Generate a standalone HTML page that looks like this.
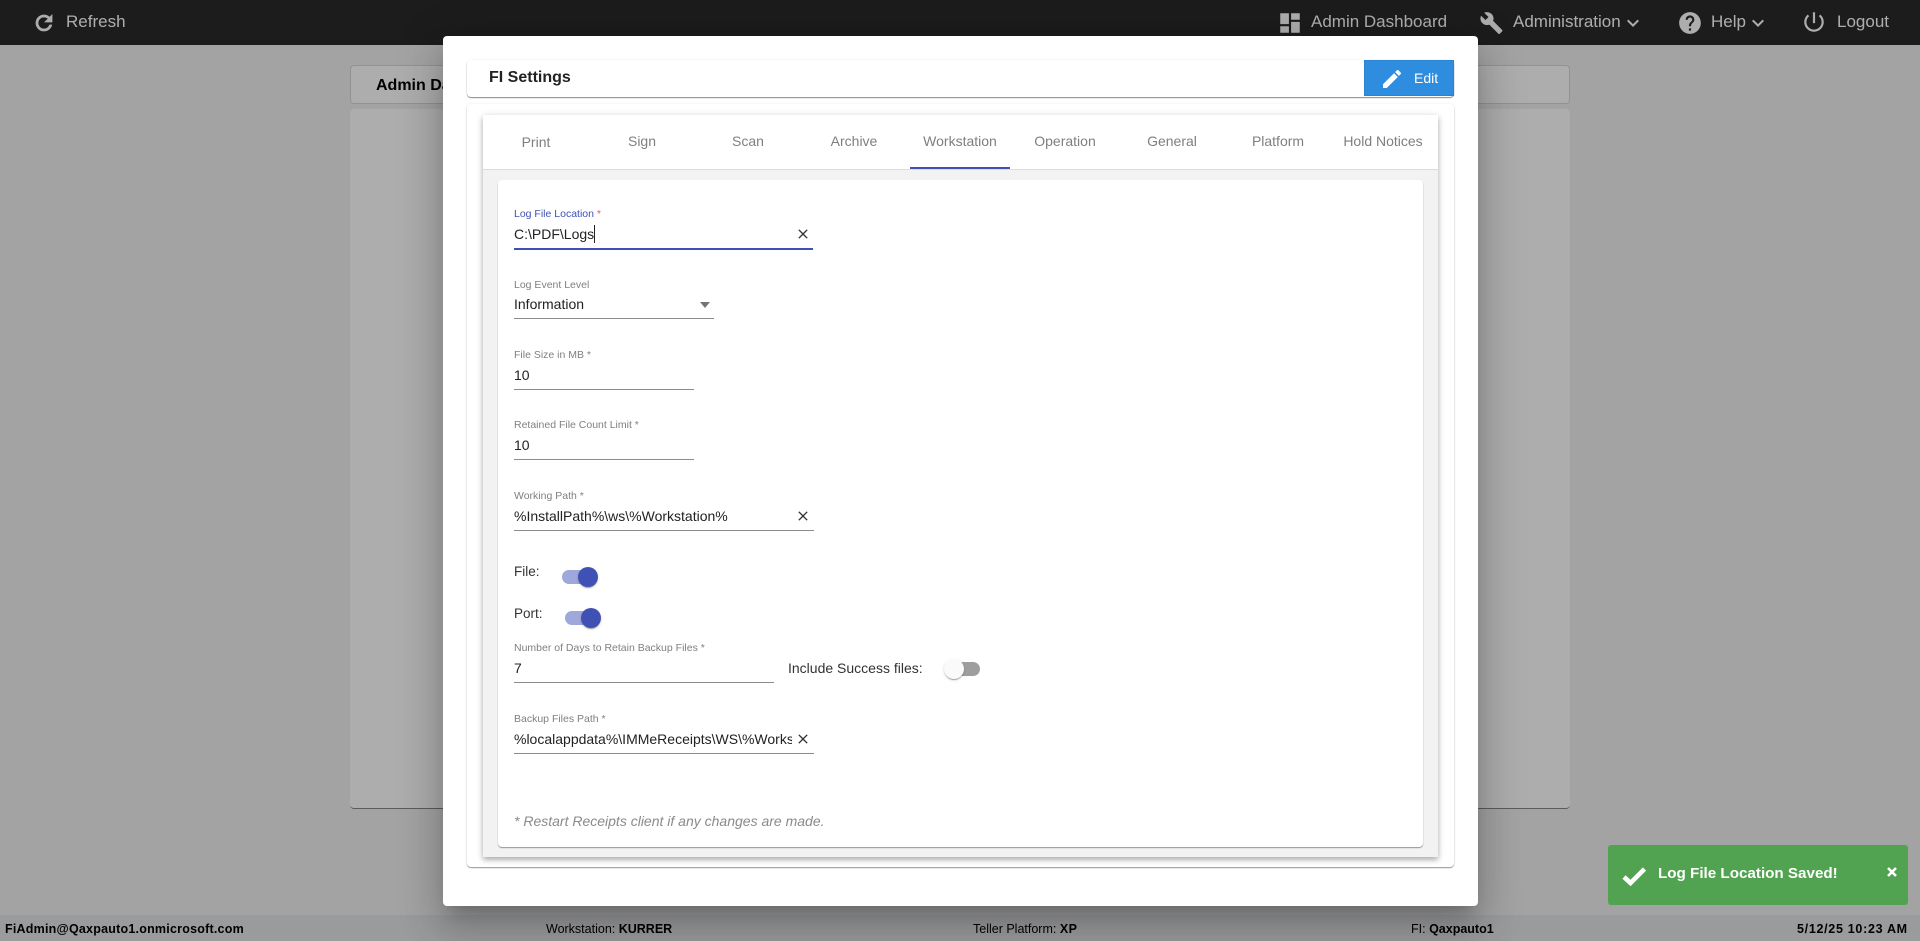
<!DOCTYPE html>
<html lang="en">
<head>
<meta charset="utf-8">
<title>FI Settings</title>
<style>
html,body{margin:0;padding:0;width:1920px;height:941px;overflow:hidden;background:#f0f0f0;font-family:"Liberation Sans",Arial,sans-serif;}
.a{position:absolute;}
.t{position:absolute;white-space:nowrap;}
svg{position:absolute;display:block;}
#top{left:0;top:0;width:1920px;height:45px;background:#2a2a2a;}
#top .t{color:#fff;font-size:17px;line-height:20px;top:12px;}
#foot{left:0;top:915px;width:1920px;height:26px;background:#e3e5e7;}
#foot .t{color:#000;font-size:12.5px;line-height:16px;top:6px;}
#overlay{left:0;top:0;width:1920px;height:941px;background:rgba(0,0,0,.32);}
.bgc{background:#fff;border-radius:4px;box-sizing:border-box;}
#modal{left:443px;top:36px;width:1035px;height:870px;background:#fff;border-radius:4px;box-shadow:0 11px 15px -7px rgba(0,0,0,.2),0 24px 38px 3px rgba(0,0,0,.14),0 9px 46px 8px rgba(0,0,0,.12);}
.lb{position:absolute;left:514px;font-size:10.5px;line-height:12px;color:#808080;white-space:nowrap;}
.v{position:absolute;left:514px;font-size:14px;line-height:18px;color:#222;white-space:nowrap;}
.u{position:absolute;left:514px;height:1px;background:#8c8c8c;}
.tab{position:absolute;top:132px;width:106px;text-align:center;font-size:14px;line-height:18px;color:#7f7f7f;}
.trk{position:absolute;width:34px;height:14px;border-radius:7px;background:#9fa8da;}
.th{position:absolute;width:20px;height:20px;border-radius:50%;background:#3f51b5;box-shadow:0 2px 1px -1px rgba(0,0,0,.2),0 1px 1px 0 rgba(0,0,0,.14),0 1px 3px 0 rgba(0,0,0,.12);}
</style>
</head>
<body>
<div class="a" id="top">
  <svg style="left:32px;top:11px" width="24" height="24" viewBox="0 0 24 24" fill="#fff" stroke="#fff" stroke-width=".8"><path d="M17.65 6.35C16.2 4.9 14.21 4 12 4c-4.42 0-7.99 3.58-7.99 8s3.57 8 7.99 8c3.73 0 6.84-2.55 7.73-6h-2.08c-.82 2.33-3.04 4-5.65 4-3.31 0-6-2.69-6-6s2.69-6 6-6c1.66 0 3.14.69 4.22 1.78L13 11h7V4l-2.35 2.35z"/></svg>
  <div class="t" style="left:66px">Refresh</div>
  <svg style="left:1277px;top:10px" width="26" height="26" viewBox="0 0 24 24" fill="#fff"><path d="M3 13h8V3H3v10zm0 8h8v-6H3v6zm10 0h8V11h-8v10zm0-18v6h8V3h-8z"/></svg>
  <div class="t" style="left:1311px">Admin Dashboard</div>
  <svg style="left:1479px;top:11px" width="25" height="24" viewBox="0 0 24 24" fill="#fff"><path d="M22.7 19l-9.1-9.1c.9-2.3.4-5-1.5-6.9-2-2-5-2.4-7.4-1.3L9 6 6 9 1.6 4.7C.4 7.1.9 10.1 2.9 12.1c1.9 1.9 4.6 2.4 6.9 1.5l9.1 9.1c.4.4 1 .4 1.4 0l2.3-2.3c.5-.4.5-1.1.1-1.4z"/></svg>
  <div class="t" style="left:1513px">Administration</div>
  <svg style="left:1621px;top:11px" width="24" height="24" viewBox="0 0 24 24" fill="#fff"><path d="M7.41 8.59L12 13.17l4.59-4.58L18 10l-6 6-6-6z"/></svg>
  <svg style="left:1677px;top:10px" width="26" height="26" viewBox="0 0 24 24" fill="#fff"><path d="M12 2C6.48 2 2 6.48 2 12s4.48 10 10 10 10-4.48 10-10S17.52 2 12 2zm1 17h-2v-2h2v2zm2.07-7.75l-.9.92C13.45 12.9 13 13.5 13 15h-2v-.5c0-1.1.45-2.1 1.17-2.83l1.24-1.26c.37-.36.59-.86.59-1.41 0-1.1-.9-2-2-2s-2 .9-2 2H8c0-2.21 1.79-4 4-4s4 1.79 4 4c0 .88-.36 1.68-.93 2.25z"/></svg>
  <div class="t" style="left:1711px">Help</div>
  <svg style="left:1746px;top:11px" width="24" height="24" viewBox="0 0 24 24" fill="#fff"><path d="M7.41 8.59L12 13.17l4.59-4.58L18 10l-6 6-6-6z"/></svg>
  <svg style="left:1801px;top:9px" width="26" height="26" viewBox="0 0 24 24" fill="#fff"><path d="M13 3h-2v10h2V3zm4.83 2.17l-1.42 1.42C17.99 7.86 19 9.81 19 12c0 3.87-3.13 7-7 7s-7-3.13-7-7c0-2.19 1.01-4.14 2.58-5.42L6.17 5.17C4.23 6.82 3 9.26 3 12c0 4.97 4.03 9 9 9s9-4.03 9-9c0-2.74-1.23-5.18-3.17-6.83z"/></svg>
  <div class="t" style="left:1837px">Logout</div>
</div>

<div class="a bgc" style="left:350px;top:65px;width:1220px;height:39px;border:1px solid #d8d8d8;"></div>
<div class="t" style="left:376px;top:77px;font-size:16px;line-height:18px;font-weight:bold;color:#000">Admin Dashboard</div>
<div class="a bgc" style="left:350px;top:109px;width:1220px;height:700px;border-bottom:1px solid #888;"></div>

<div class="a" id="foot">
  <div class="t" style="left:5px;font-weight:bold;letter-spacing:.22px">FiAdmin@Qaxpauto1.onmicrosoft.com</div>
  <div class="t" style="left:546px;">Workstation: <b>KURRER</b></div>
  <div class="t" style="left:973px;">Teller Platform: <b style="letter-spacing:.5px">XP</b></div>
  <div class="t" style="left:1411px;">FI: <b>Qaxpauto1</b></div>
  <div class="t" style="left:1797px;font-weight:bold;letter-spacing:.7px">5/12/25 10:23 AM</div>
</div>

<div class="a" id="overlay"></div>

<div class="a" id="modal"></div>

<!-- header card -->
<div class="a" style="left:467px;top:60px;width:987px;height:37px;background:#fff;border-radius:4px;box-shadow:0 1px 1px rgba(0,0,0,.45),0 0 2px rgba(0,0,0,.08);"></div>
<div class="t" style="left:489px;top:68px;font-size:16px;line-height:20px;font-weight:bold;color:#222">FI Settings</div>
<div class="a" style="left:1364px;top:60px;width:90px;height:36px;background:#2f8ddf;box-sizing:border-box;border:1px solid #2a84d2;"></div>
<svg style="left:1380px;top:67px" width="24" height="24" viewBox="0 0 24 24" fill="#fff"><path d="M3 17.25V21h3.75L17.81 9.94l-3.75-3.75L3 17.25zM20.71 7.04c.39-.39.39-1.02 0-1.41l-2.34-2.34c-.39-.39-1.02-.39-1.41 0l-1.83 1.83 3.75 3.75 1.83-1.83z"/></svg>
<div class="t" style="left:1414px;top:69px;font-size:14px;line-height:18px;color:#fff">Edit</div>

<!-- outer content card -->
<div class="a" style="left:467px;top:104px;width:987px;height:763px;background:#fff;border-radius:4px;box-shadow:0 1px 1px rgba(0,0,0,.4),0 0 3px rgba(0,0,0,.07);"></div>

<!-- tabs card -->
<div class="a" style="left:483px;top:115px;width:955px;height:742px;background:#f2f2f2;box-shadow:0 3px 5px rgba(0,0,0,.25),0 1px 8px rgba(0,0,0,.12);"></div>
<div class="a" style="left:483px;top:115px;width:955px;height:54px;background:#fff;border-bottom:1px solid #dcdcdc;"></div>
<div class="tab" style="left:483px;top:133px">Print</div>
<div class="tab" style="left:589px">Sign</div>
<div class="tab" style="left:695px">Scan</div>
<div class="tab" style="left:801px">Archive</div>
<div class="tab" style="left:907px">Workstation</div>
<div class="tab" style="left:1012px">Operation</div>
<div class="tab" style="left:1119px">General</div>
<div class="tab" style="left:1225px">Platform</div>
<div class="tab" style="left:1330px">Hold Notices</div>
<div class="a" style="left:910px;top:167px;width:100px;height:2px;background:#3f51b5;"></div>

<!-- inner form card -->
<div class="a" style="left:498px;top:180px;width:925px;height:667px;background:#fff;border-radius:4px;box-shadow:0 1px 1px rgba(0,0,0,.4);"></div>

<div class="lb" style="top:208px;color:#3f51b5">Log File Location <span style="color:#f44a7a">*</span></div>
<div class="v" style="top:225px">C:\PDF\Logs</div>
<div class="a" style="left:594px;top:225px;width:1px;height:18px;background:#222"></div>
<svg style="left:795px;top:226px" width="16" height="16" viewBox="0 0 24 24" fill="#333"><path d="M19 6.41L17.59 5 12 10.59 6.41 5 5 6.41 10.59 12 5 17.59 6.41 19 12 13.41 17.59 19 19 17.59 13.41 12z"/></svg>
<div class="u" style="top:248px;width:299px;height:2px;background:#3f51b5"></div>

<div class="lb" style="top:279px">Log Event Level</div>
<div class="v" style="top:295px">Information</div>
<svg style="left:700px;top:302px" width="10" height="6" viewBox="0 0 10 6" fill="#757575"><path d="M0 0h10L5 6z"/></svg>
<div class="u" style="top:318px;width:200px"></div>

<div class="lb" style="top:349px">File Size in MB *</div>
<div class="v" style="top:366px">10</div>
<div class="u" style="top:389px;width:180px"></div>

<div class="lb" style="top:419px">Retained File Count Limit *</div>
<div class="v" style="top:436px">10</div>
<div class="u" style="top:459px;width:180px"></div>

<div class="lb" style="top:490px">Working Path *</div>
<div class="v" style="top:507px">%InstallPath%\ws\%Workstation%</div>
<svg style="left:795px;top:508px" width="16" height="16" viewBox="0 0 24 24" fill="#333"><path d="M19 6.41L17.59 5 12 10.59 6.41 5 5 6.41 10.59 12 5 17.59 6.41 19 12 13.41 17.59 19 19 17.59 13.41 12z"/></svg>
<div class="u" style="top:530px;width:300px"></div>

<div class="v" style="top:563px;color:#333;font-size:13.5px">File:</div>
<div class="trk" style="left:562px;top:570px"></div>
<div class="th" style="left:578px;top:567px"></div>

<div class="v" style="top:605px;color:#333;font-size:13.5px">Port:</div>
<div class="trk" style="left:565px;top:611px"></div>
<div class="th" style="left:581px;top:608px"></div>

<div class="lb" style="top:642px">Number of Days to Retain Backup Files *</div>
<div class="v" style="top:659px">7</div>
<div class="u" style="top:682px;width:260px"></div>

<div class="v" style="left:788px;top:659px;color:#333">Include Success files:</div>
<div class="trk" style="left:946px;top:662px;background:#9e9e9e"></div>
<div class="th" style="left:944px;top:659px;background:#fafafa"></div>

<div class="lb" style="top:713px">Backup Files Path *</div>
<div class="v" style="top:730px;width:278px;overflow:hidden">%localappdata%\IMMeReceipts\WS\%Workstation%</div>
<svg style="left:795px;top:731px" width="16" height="16" viewBox="0 0 24 24" fill="#333"><path d="M19 6.41L17.59 5 12 10.59 6.41 5 5 6.41 10.59 12 5 17.59 6.41 19 12 13.41 17.59 19 19 17.59 13.41 12z"/></svg>
<div class="u" style="top:753px;width:300px"></div>

<div class="t" style="left:514px;top:812px;font-size:14px;line-height:18px;font-style:italic;color:#8a8a8a">* Restart Receipts client if any changes are made.</div>

<!-- toast -->
<div class="a" style="left:1608px;top:845px;width:300px;height:60px;background:#51a351;border-radius:3px;"></div>
<svg style="left:1622px;top:866px" width="25" height="20" viewBox="0 0 25 20"><path d="M2 11l6.5 6L22.5 3" fill="none" stroke="#fff" stroke-width="4.6"/></svg>
<div class="t" style="left:1658px;top:865px;font-size:15.2px;line-height:18px;font-weight:bold;color:#fff">Log File Location Saved!</div>
<svg style="left:1886px;top:866px" width="12" height="12" viewBox="0 0 12 12"><path d="M2 2l8 8M10 2l-8 8" fill="none" stroke="#fff" stroke-width="2.6"/></svg>
</body>
</html>
